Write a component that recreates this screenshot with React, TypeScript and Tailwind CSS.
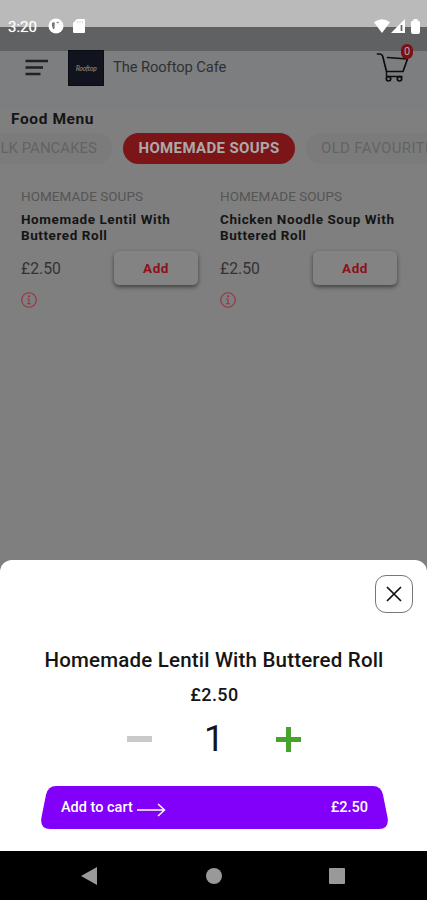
import React from 'react';

function StatusBar() {
  return (
    <div className="absolute inset-x-0 top-0 flex h-[52px] items-center text-white">
      <span className="ml-2 mt-[2px] w-[40px] text-[15px] leading-[20px] [text-shadow:0_0_1px_rgba(255,255,255,0.6)]">3:20</span>
      <svg className="h-4 w-4" viewBox="0 0 16 16">
        <circle cx="8" cy="8" r="7.5" fill="#fff" />
        <path d="M3.8 5.2Q5.500 3.500 6.800 4.500L6.500 10.500Q5.500 11.500 4.900 10.500L4 8Z" fill="#777" />
        <path d="M8.500 4.500h2.500" stroke="#999" strokeWidth="1.4" />
      </svg>
      <svg className="ml-[9px] h-[14px] w-3" viewBox="0 0 12 14">
        <path d="M4 0h7q1 0 1 1v12q0 1-1 1H1q-1 0-1-1V4Z" fill="#fff" />
        <path d="M4.5 2v2M7 2v2M9.5 2v2" stroke="#ccc" strokeWidth=".8" />
      </svg>
      <svg className="ml-auto h-[14px] w-4" viewBox="0 0 16 14">
        <path d="M0 3.2Q8-2.8 16 3.2L8 14Z" fill="#fff" />
      </svg>
      <svg className="ml-[1px] h-[14px] w-[14px]" viewBox="0 0 14 14">
        <path d="M14 0v14H0Z" fill="#fff" />
        <path d="M10.5 6v6" stroke="#666" strokeWidth="1.8" />
      </svg>
      <svg className="ml-[6px] mr-[7px] h-[15px] w-[9px]" viewBox="0 0 9 15">
        <path d="M2.5 1.5V0h4v1.5Q9 1.5 9 4v9q0 2-2 2H2q-2 0-2-2V4Q0 1.5 2.5 1.5Z" fill="#fff" />
      </svg>
    </div>
  );
}

function Header() {
  return (
    <header className="flex h-[57px] shrink-0 bg-[#7c7e80]">
      <svg className="ml-[25px] mt-[7px] h-[19px] w-[24px]" viewBox="0 0 24 19" stroke="#202122" strokeWidth="2.6">
        <path d="M.5 3h22.500M.5 9.500h17.500M.5 16h15" />
      </svg>
      <div className="ml-[19px] -mt-[1px] flex h-[36px] w-[36px] items-center justify-center border border-[#0a0c13] bg-[#11141e]">
        <span className="font-['Lato',sans-serif] text-[7px] font-bold italic leading-none tracking-[-0.4px] text-[#86705a]">Rooftop</span>
      </div>
      <span className="ml-[9px] mt-[6px] text-[14.75px] leading-[20px] tracking-[-0.1px] text-[#303132]">The Rooftop Cafe</span>
      <div className="relative ml-auto mr-[13px] h-[32px] w-[38px]">
        <svg className="h-[32px] w-[38px]" viewBox="0 0 38 32" fill="none" stroke="#0c0d0e" strokeWidth="1.7" strokeLinecap="round" strokeLinejoin="round">
          <path d="M1.500 3h2.500q2 0 2.700 2.200L10.500 20.500H27L31.500 8 11.500 6.500" />
          <path d="M10.500 21v4.500H26" strokeWidth="1.4" />
          <circle cx="12.500" cy="27.800" r="2.200" />
          <circle cx="23.500" cy="27.800" r="2.200" />
        </svg>
        <span className="absolute -top-[7px] right-[1px] flex h-[15px] w-[12px] items-center justify-center rounded-full bg-[#7e1014] text-[11px] leading-none text-[#aaa]">0</span>
      </div>
    </header>
  );
}

function FoodCard({ name }: { name: string }) {
  return (
    <article className="w-[199px] shrink-0">
      <p className="text-[13.5px] leading-[16px] tracking-[0.03px] text-[#555]">HOMEMADE SOUPS</p>
      <h3 className="mt-[7px] w-[184px] whitespace-nowrap text-[13.5px] font-bold leading-[16px] tracking-[0.57px] text-[#151515]">
        {name}<br />Buttered Roll
      </h3>
      <div className="mt-[8px] flex h-[34px] items-center">
        <span className="mt-[1px] text-[15.75px] text-[#333]">£2.50</span>
        <button className="ml-auto mr-[22px] h-[34px] w-[84px] rounded-[5px] bg-[#838383] text-[13.5px] font-bold tracking-[0.5px] text-[#8c1119] shadow-[0_2px_4px_rgba(0,0,0,0.5)]">Add</button>
      </div>
      <svg className="mt-[7px] h-4 w-4" viewBox="0 0 16 16" fill="none" stroke="#98343f" strokeWidth="1.1">
        <circle cx="8" cy="8" r="7.300" />
        <path d="M6.300 7H8v4.500M6 11.700h4" />
        <circle cx="8" cy="4.300" r=".55" fill="#98343f" />
      </svg>
    </article>
  );
}

function MenuPage() {
  return (
    <>
      <div className="h-[27px] shrink-0 bg-[#bababa]" />
      <div className="h-[24px] shrink-0 bg-[#5f6162]" />
      <Header />
      <section className="h-[452px] shrink-0 overflow-hidden">
        <h2 className="ml-[11px] mt-px text-[15.5px] font-bold leading-[20px] tracking-[0.6px] text-[#151515]">Food Menu</h2>
        <nav className="mt-[4px] flex h-[31px] w-[427px] gap-[11px] overflow-hidden whitespace-nowrap text-[15px] leading-[31px]">
          <span className="flex w-[112px] shrink-0 justify-end rounded-r-full bg-[#7b7b7b] pr-[15px] text-[#636363]">MILK PANCAKES</span>
          <span className="w-[172px] shrink-0 rounded-full bg-[#7b1517] text-center font-bold tracking-[0.35px] text-[#aaa]">HOMEMADE SOUPS</span>
          <span className="w-[172px] shrink-0 rounded-full bg-[#7b7b7b] pl-[15px] tracking-[0.35px] text-[#636363]">OLD FAVOURITES</span>
        </nav>
        <div className="ml-[21px] mt-[24px] flex">
          <FoodCard name="Homemade Lentil With" />
          <FoodCard name="Chicken Noodle Soup With" />
        </div>
      </section>
    </>
  );
}

function ItemSheet() {
  return (
    <section className="flex h-[291px] shrink-0 flex-col rounded-t-[12px] bg-white text-[#151515]">
      <button className="ml-auto mr-[14px] mt-[15px] flex h-[38px] w-[38px] items-center justify-center rounded-[11px] border border-[#777]">
        <svg className="h-[16px] w-[16px]" viewBox="0 0 16 16" stroke="#111" strokeWidth="1.7"><path d="m1 1 14 14M15 1 1 15" /></svg>
      </button>
      <h1 className="mt-[35px] pl-px text-center text-[20.5px] font-medium leading-[24px] tracking-[0.19px]">Homemade Lentil With Buttered Roll</h1>
      <p className="mt-[11px] pl-[2px] text-center text-[18px] font-medium leading-[24px] tracking-[0.4px]">£2.50</p>
      <div className="mt-[11px] flex h-[42px] items-center justify-between pl-[127px] pr-[126px]">
        <span className="h-[6px] w-[25px] bg-[#c9cacb]" />
        <span className="text-[36px] leading-[42px] text-[#151515]">1</span>
        <svg className="h-[25px] w-[25px]" viewBox="0 0 25 25" stroke="#47a32c" strokeWidth="5"><path d="M0 12.500h25M12.500 0v25" /></svg>
      </div>
      <button className="relative ml-[41px] mt-[26px] flex h-[43px] w-[347px] items-center pl-[20px] pr-[20px] text-[14.5px] font-medium text-white">
        <svg className="absolute inset-0 h-[43px] w-[347px]" viewBox="0 0 347 44" preserveAspectRatio="none">
          <path d="M15 0H332Q340 0 342 9L346.500 32Q348.500 44 338 44H9Q-1.500 44 .5 32L5 9Q7 0 15 0Z" fill="#8200fa" />
        </svg>
        <span className="relative">Add to cart</span>
        <svg className="relative ml-[4px] mt-[5px] h-[14px] w-[29px]" viewBox="0 0 29 14" fill="none" stroke="#fff" strokeWidth="1.500"><path d="M0 7h27M21 1l6.500 6-6.500 6" /></svg>
        <span className="relative ml-auto">£2.50</span>
      </button>
    </section>
  );
}

export default function App() {
  return (
    <main className="relative flex h-[900px] w-[427px] flex-col overflow-hidden bg-[#7f7f7f] font-['Roboto',sans-serif]">
      <MenuPage />
      <ItemSheet />
      <footer className="flex h-[49px] shrink-0 items-center bg-black pl-[81px] pr-[82px]">
        <svg className="h-[18px] w-[264px]" viewBox="0 0 264 18" fill="#999">
          <path d="M16 0v18L0 9Z" /><circle cx="133" cy="9" r="8" /><rect x="248" y="1" width="16" height="16" rx="1" />
        </svg>
      </footer>
      <StatusBar />
    </main>
  );
}
